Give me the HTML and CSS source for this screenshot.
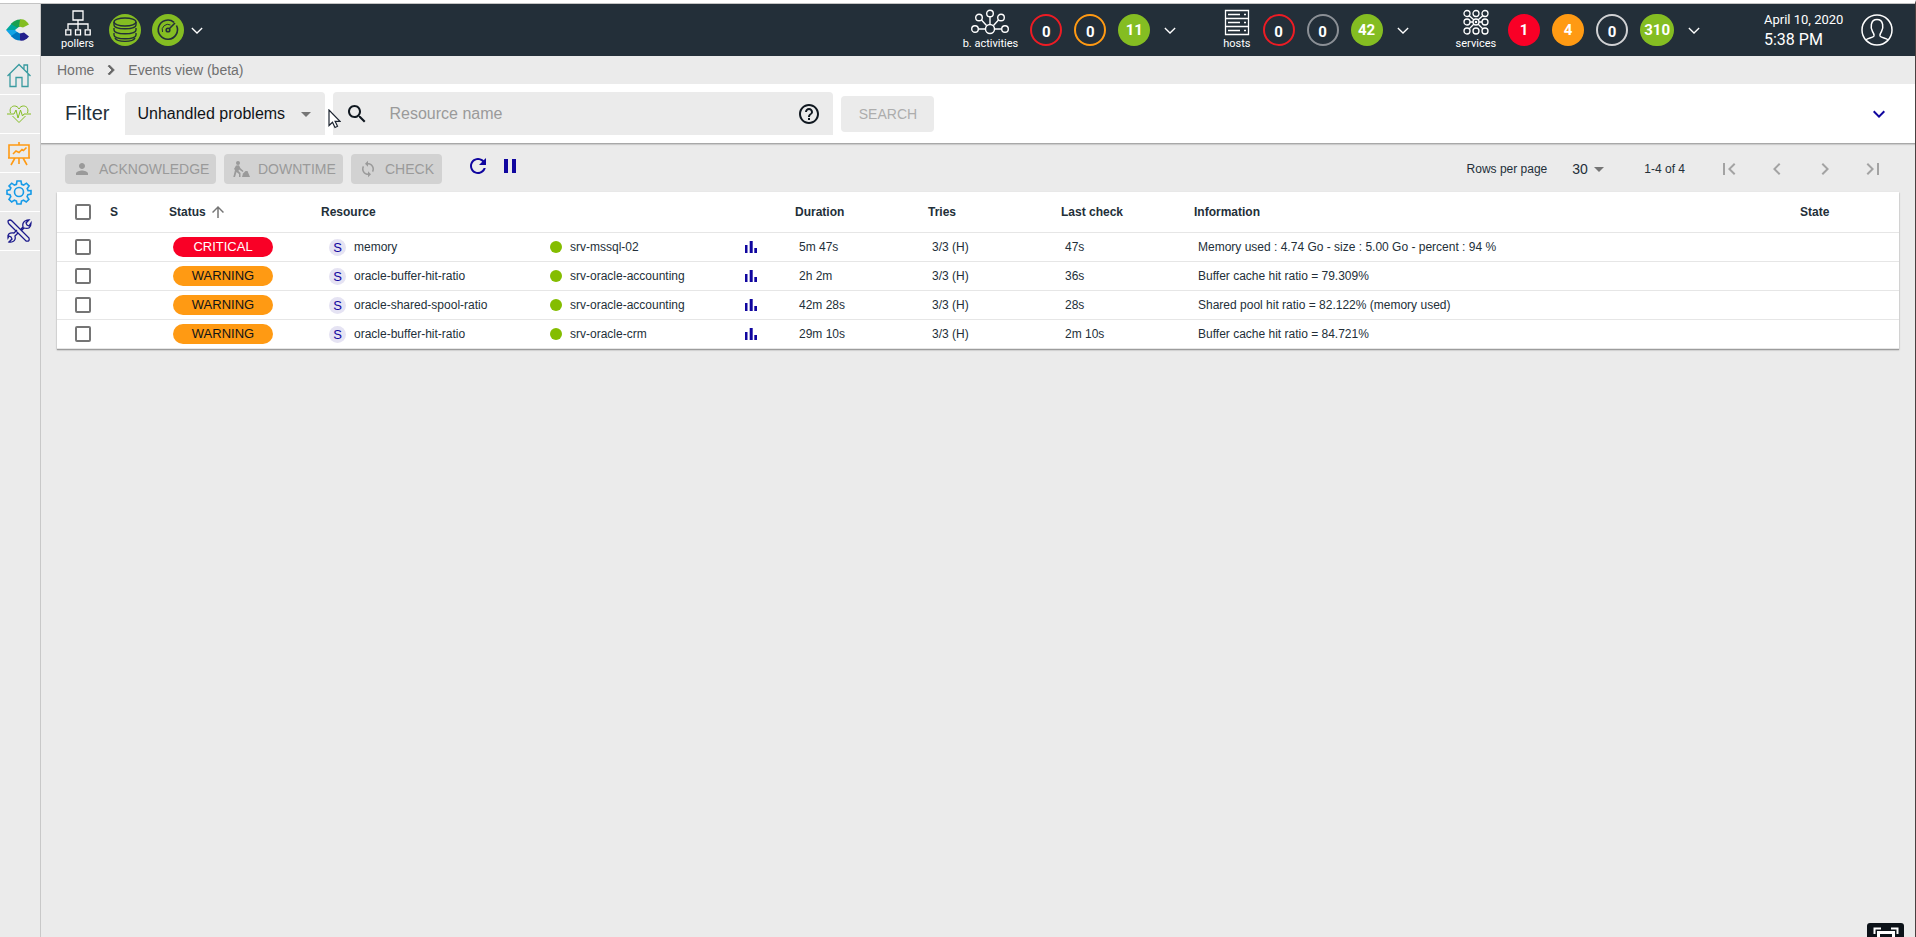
FILE: index.html
```html
<!DOCTYPE html>
<html lang="en">
<head>
<meta charset="utf-8">
<title>Events view</title>
<link rel="stylesheet" href="styles.css">
</head>
<body>
<svg class="defs" aria-hidden="true">
  <symbol id="chevron" viewBox="0 0 14 8"><path d="M1 1l6 6 6-6" fill="none" stroke="currentColor" stroke-width="1.5"/></symbol>
  <symbol id="bars" viewBox="0 0 12 12"><path d="M0 4h2.500v8H0zM4.700 0h3v12h-3zM9.300 7H12v5H9.300z" fill="currentColor"/></symbol>
  <symbol id="caret" viewBox="0 0 24 24"><path d="M7 10l5 5 5-5z" fill="currentColor"/></symbol>
</svg>
<div class="app">
  <nav class="sidebar" aria-label="Main">
    <a class="side-item side-logo" href="#" aria-label="Centreon">
      <svg width="24" height="24" viewBox="0 0 24 24">
        <path d="M0 12L6 5l8 3-5 4z" fill="#00a79b"/>
        <path d="M5 6q4-5 10-4.500l-1 7-3 1z" fill="#19a050"/>
        <path d="M14 1.500q5-1 9 5L17 9.500 13 8.500z" fill="#84bd22"/>
        <path d="M0 12h9l3 3-6 4z" fill="#12a5e6"/>
        <path d="M5 18l6-4 4 2-1 6.500q-5 0-9-4.500z" fill="#0079c2"/>
        <path d="M14 22.500l0-7 4-1 5 4q-4 5-9 4z" fill="#221f8c"/>
      </svg>
    </a>
    <a class="side-item home" href="#" aria-label="Home">
      <svg width="26" height="26" viewBox="0 0 26 26"><path d="M1.500 14L13 2.500 24.500 14M4 12v12.500h6v-9h6v9h6V12M18 7V3h3.500v7.500"/></svg>
    </a>
    <a class="side-item monitoring" href="#" aria-label="Monitoring">
      <svg width="26" height="26" viewBox="0 0 26 26"><path d="M4.500 12C3 7 6 5 8.500 5c2 0 3.500 1 4.500 3 1-2 2.500-3 4.500-3 2.500 0 5.500 2 4 7M6.500 15l6.500 6.500 6.500-6.500M1 13h7l2-4 2 8 2.500-8 2 6 1.500-2h7"/></svg>
    </a>
    <a class="side-item reporting" href="#" aria-label="Reporting">
      <svg width="26" height="26" viewBox="0 0 26 26"><path d="M3 5h20v13H3zM13 5V2M2 18h22M9 18l-4 7M17 18l4 7M13 18v6M7 14l3-3 3 1.500 3-3 1.500 1 3-3"/></svg>
    </a>
    <a class="side-item config" href="#" aria-label="Configuration">
      <svg width="26" height="26" viewBox="0 0 26 26"><circle cx="13" cy="13" r="4.500"/><path d="M11 2h4l.6 3.300 2 .8 2.800-1.900 2.700 2.700-1.900 2.800.9 2L25 11.500v3.500l-3.100.6-.8 2 1.800 2.700-2.700 2.700-2.700-1.800-2 .8L15 25h-4l-.6-3-2-.8L5.700 23 3 20.300l1.800-2.700-.8-2-3-.6v-3.500l3-.6.9-2L3 6.900l2.700-2.700 2.700 1.900 2-.8z"/></svg>
    </a>
    <a class="side-item admin" href="#" aria-label="Administration">
      <svg width="26" height="26" viewBox="0 0 26 26"><path d="M2 3q2-2 4 0l17 17q1 4-3 3L3 6q-1-1-1-3zM15 11l2-2q-1-4 2-6 2-1 4-1l-3 3 1 2 2 1 2-3q0 7-7 5l-3 3M12 15l-3 3q1 4-2 5.500-2 1-4 .5l3-3-1-2-2-1-1 2q-1-6 6-5l3-3"/></svg>
    </a>
  </nav>

  <div class="page">
    <header class="topbar">
      <div class="top-group pollers">
        <div class="top-label">
          <svg width="26" height="27" viewBox="0 0 26 27"><path d="M8 1h10v9H8zM13 10v9M3 19v-5h20v5M.8 19.800h5v5h-5zM10.500 19.800h5v5h-5zM20.200 19.800h5v5h-5z" fill="none" stroke="#fff" stroke-width="1.300"/></svg>
          <span>pollers</span>
        </div>
        <svg width="32" height="32" viewBox="0 0 32 32"><circle cx="16" cy="16" r="16" fill="#84bd22"/><g fill="none" stroke="#232f39" stroke-width="1.400"><ellipse cx="16" cy="8" rx="11" ry="4"/><path d="M5 8v3c0 5 22 5 22 0V8M5 14v2c0 5 22 5 22 0v-2M5 19v2c0 5 22 5 22 0v-2M6 24c2 4.500 18 4.500 20 0"/></g></svg>
        <svg width="32" height="32" viewBox="0 0 32 32"><circle cx="16" cy="16" r="16" fill="#84bd22"/><g fill="none" stroke="#232f39" stroke-width="1.600"><path d="M22 8.300A9.600 9.600 0 1 0 24.500 11.500"/><path d="M10.500 18a5.700 5.700 0 0 1 8-7" stroke-width="1"/><circle cx="16" cy="16" r="1.800"/><path d="M17 15l6-6"/></g></svg>
        <svg class="chev" width="12" height="7"><use href="#chevron"/></svg>
      </div>

      <div class="top-group activities">
        <div class="top-label">
          <svg width="38" height="27" viewBox="0 0 38 27"><g fill="none" stroke="#fff" stroke-width="1.400"><circle cx="19" cy="20" r="4.500"/><circle cx="19" cy="4.500" r="3.300"/><circle cx="8" cy="8.500" r="3.300"/><circle cx="30" cy="8.500" r="3.300"/><circle cx="4" cy="20" r="3.300"/><circle cx="34" cy="20" r="3.300"/><path d="M19 8v7.500M10.500 11l5 5.500M27.500 11l-5 5.500M7.300 20h7.200M23.500 20h7.200"/></g></svg>
          <span>b. activities</span>
        </div>
        <span class="badge line-red">0</span><span class="badge line-orange">0</span><span class="badge green">11</span>
        <svg class="chev" width="12" height="7"><use href="#chevron"/></svg>
      </div>
      <div class="top-group">
        <div class="top-label">
          <svg width="26" height="27" viewBox="0 0 26 27"><g fill="none" stroke="#fff" stroke-width="1.300"><path d="M1.500 1.500h23v24h-23zM1.500 9.500h23M1.500 17.500h23M4 5.500h12M4 13.500h12M4 21.500h12M20 5.500h2M20 13.500h2M20 21.500h2"/></g></svg>
          <span>hosts</span>
        </div>
        <span class="badge line-red">0</span><span class="badge line-gray">0</span><span class="badge green">42</span>
        <svg class="chev" width="12" height="7"><use href="#chevron"/></svg>
      </div>
      <div class="top-group">
        <div class="top-label">
          <svg width="26" height="27" viewBox="0 0 26 27"><g fill="none" stroke="#fff" stroke-width="1.300"><circle cx="4" cy="4.500" r="3"/><circle cx="13" cy="4.500" r="3"/><circle cx="22" cy="4.500" r="3"/><circle cx="4" cy="13" r="3"/><circle cx="13" cy="13" r="3"/><circle cx="22" cy="13" r="3"/><circle cx="4" cy="22" r="3"/><circle cx="13" cy="22" r="3"/><circle cx="22" cy="22" r="3"/><path d="M6 6.500l5 4.500M20 6.500L15 11M6 20l5-5M20 20l-5-5M7 13h3M16 13h3"/><circle cx="13" cy="13" r=".6"/></g></svg>
          <span>services</span>
        </div>
        <span class="badge red">1</span><span class="badge orange">4</span><span class="badge line-light">0</span><span class="badge green">310</span>
        <svg class="chev" width="12" height="7"><use href="#chevron"/></svg>
      </div>
      <div class="clock"><span>April 10, 2020</span><span class="time">5:38 PM</span></div>
      <svg width="32" height="32" viewBox="0 0 32 32"><g fill="none" stroke="#fff" stroke-width="1.500"><circle cx="16" cy="16" r="15"/><path d="M5 26c1-2 7-2 8-4 .5-1.500-.5-3-1.500-4.500-2-3-2.500-12 4.500-12s6.500 9 4.500 12c-1 1.500-2 3-1.500 4.500 1 2 7 2 8 4"/></g></svg>
    </header>

    <nav class="crumbs" aria-label="Breadcrumb">
      <a href="#">Home</a>
      <svg width="20" height="20" viewBox="0 0 24 24"><path d="M10 6L8.590 7.410 13.170 12l-4.580 4.590L10 18l6-6z" fill="#666" stroke="#666"/></svg>
      <a href="#">Events view (beta)</a>
    </nav>

    <section class="filter">
      <label class="filter-title" for="criteria">Filter</label>
      <div class="select-box criteria">
        <select id="criteria"><option>Unhandled problems</option></select>
        <svg width="24" height="24"><use href="#caret"/></svg>
      </div>
      <div class="search-box">
        <svg width="24" height="24" viewBox="0 0 24 24"><path fill="#101820" d="M15.500 14h-.79l-.28-.27C15.410 12.590 16 11.110 16 9.500 16 5.910 13.090 3 9.500 3S3 5.910 3 9.500 5.910 16 9.500 16c1.610 0 3.090-.59 4.230-1.570l.27.28v.79l5 4.990L20.490 19l-4.990-5zm-6 0C7.010 14 5 11.990 5 9.500S7.010 5 9.500 5 14 7.010 14 9.500 11.990 14 9.500 14z"/></svg>
        <input type="text" placeholder="Resource name" aria-label="Resource name">
        <svg width="24" height="24" viewBox="0 0 24 24"><path fill="#101820" d="M11 18h2v-2h-2v2zm1-16C6.480 2 2 6.480 2 12s4.480 10 10 10 10-4.480 10-10S17.520 2 12 2zm0 18c-4.410 0-8-3.590-8-8s3.590-8 8-8 8 3.590 8 8-3.590 8-8 8zm0-14c-2.210 0-4 1.790-4 4h2c0-1.100.9-2 2-2s2 .9 2 2c0 2-3 1.750-3 5h2c0-2.250 3-2.500 3-5 0-2.210-1.790-4-4-4z"/></svg>
      </div>
      <button class="search-btn" type="button" disabled>SEARCH</button>
      <button class="icon-btn expand" type="button" aria-label="Expand">
        <svg width="24" height="24" viewBox="0 0 24 24"><path d="M16.590 8.590L12 13.170 7.410 8.590 6 10l6 6 6-6z" fill="currentColor"/></svg>
      </button>
    </section>

    <main class="content">
      <div class="toolbar">
        <button class="action ack" type="button" disabled>
          <svg width="18" height="18" viewBox="0 0 24 24"><path fill="currentColor" d="M12 12c2.210 0 4-1.790 4-4s-1.790-4-4-4-4 1.790-4 4 1.790 4 4 4zm0 2c-2.670 0-8 1.340-8 4v2h16v-2c0-2.660-5.330-4-8-4z"/></svg>ACKNOWLEDGE</button>
        <button class="action down" type="button" disabled>
          <svg width="18" height="18" viewBox="0 0 18 18"><g fill="currentColor"><circle cx="6" cy="3" r="2"/><path d="M4 5.500l3-.3 1.500 3 3 2.800-.8 1L7 9.500 6.500 11l2 2V17H7v-3l-2.500-2L3 17H1.300L3 10 2 9z"/><path d="M10 17l1-3.500L13.500 11h2L18 17z"/></g></svg>DOWNTIME</button>
        <button class="action check" type="button" disabled>
          <svg width="18" height="18" viewBox="0 0 24 24"><path fill="currentColor" d="M12 4V1L8 5l4 4V6c3.310 0 6 2.690 6 6 0 1.010-.25 1.970-.7 2.800l1.460 1.460C19.540 15.030 20 13.570 20 12c0-4.420-3.580-8-8-8zm0 14c-3.310 0-6-2.690-6-6 0-1.010.25-1.970.7-2.800L5.240 7.740C4.460 8.970 4 10.430 4 12c0 4.420 3.580 8 8 8v3l4-4-4-4v3z"/></svg>CHECK</button>
        <div class="refresh">
          <button class="icon-btn" type="button" aria-label="Refresh"><svg width="24" height="24" viewBox="0 0 24 24"><path fill="currentColor" d="M17.650 6.350C16.200 4.900 14.210 4 12 4c-4.420 0-7.990 3.580-7.990 8s3.570 8 7.990 8c3.730 0 6.840-2.550 7.730-6h-2.080c-.82 2.330-3.040 4-5.650 4-3.310 0-6-2.690-6-6s2.690-6 6-6c1.660 0 3.140.69 4.220 1.780L13 11h7V4l-2.350 2.350z"/></svg></button>
          <button class="icon-btn" type="button" aria-label="Pause"><svg width="24" height="24" viewBox="0 0 24 24"><path fill="currentColor" d="M6 19h4V5H6v14zm8-14v14h4V5h-4z"/></svg></button>
        </div>
        <div class="pager">
          <label for="rows">Rows per page</label>
          <div class="select-box rows">
            <select id="rows"><option>30</option></select>
            <svg width="24" height="24"><use href="#caret"/></svg>
          </div>
          <span class="range">1-4 of 4</span>
          <button class="page-btn" type="button" disabled aria-label="First page"><svg width="24" height="24" viewBox="0 0 24 24"><path fill="currentColor" d="M18.410 16.590L13.820 12l4.590-4.590L17 6l-6 6 6 6zM6 6h2v12H6z"/></svg></button>
          <button class="page-btn" type="button" disabled aria-label="Previous page"><svg width="24" height="24" viewBox="0 0 24 24"><path fill="currentColor" d="M15.410 7.410L14 6l-6 6 6 6 1.410-1.410L10.830 12z"/></svg></button>
          <button class="page-btn" type="button" disabled aria-label="Next page"><svg width="24" height="24" viewBox="0 0 24 24"><path fill="currentColor" d="M10 6L8.590 7.410 13.170 12l-4.580 4.590L10 18l6-6z"/></svg></button>
          <button class="page-btn" type="button" disabled aria-label="Last page"><svg width="24" height="24" viewBox="0 0 24 24"><path fill="currentColor" d="M5.590 7.410L10.180 12l-4.590 4.590L7 18l6-6-6-6zM16 6h2v12h-2z"/></svg></button>
        </div>
      </div>

      <table class="events">
        <colgroup><col class="c-check"><col class="c-sev"><col class="c-status"><col class="c-res"><col class="c-parent"><col class="c-graph"><col class="c-dur"><col class="c-tries"><col class="c-last"><col><col class="c-state"></colgroup>
        <thead>
          <tr>
            <th class="pick"><input type="checkbox" aria-label="Select all"></th>
            <th>S</th>
            <th><span class="sort">Status <svg width="18" height="18" viewBox="0 0 24 24"><path fill="#757575" d="M4 12l1.410 1.410L11 7.830V20h2V7.830l5.580 5.590L20 12l-8-8-8 8z"/></svg></span></th>
            <th colspan="3">Resource</th><th>Duration</th><th>Tries</th><th>Last check</th><th>Information</th><th>State</th>
          </tr>
        </thead>
        <tbody>
          <tr>
            <td class="pick"><input type="checkbox" aria-label="Select memory"></td><td></td>
            <td><span class="chip critical">CRITICAL</span></td>
            <td><span class="res"><span class="kind">S</span>memory</span></td>
            <td><span class="host">srv-mssql-02</span></td>
            <td class="graph"><svg width="12" height="12"><use href="#bars"/></svg></td>
            <td>5m 47s</td><td>3/3 (H)</td><td>47s</td><td>Memory used : 4.74 Go - size : 5.00 Go - percent : 94 %</td><td></td>
          </tr>
          <tr>
            <td class="pick"><input type="checkbox" aria-label="Select oracle-buffer-hit-ratio"></td><td></td>
            <td><span class="chip warning">WARNING</span></td>
            <td><span class="res"><span class="kind">S</span>oracle-buffer-hit-ratio</span></td>
            <td><span class="host">srv-oracle-accounting</span></td>
            <td class="graph"><svg width="12" height="12"><use href="#bars"/></svg></td>
            <td>2h 2m</td><td>3/3 (H)</td><td>36s</td><td>Buffer cache hit ratio = 79.309%</td><td></td>
          </tr>
          <tr>
            <td class="pick"><input type="checkbox" aria-label="Select oracle-shared-spool-ratio"></td><td></td>
            <td><span class="chip warning">WARNING</span></td>
            <td><span class="res"><span class="kind">S</span>oracle-shared-spool-ratio</span></td>
            <td><span class="host">srv-oracle-accounting</span></td>
            <td class="graph"><svg width="12" height="12"><use href="#bars"/></svg></td>
            <td>42m 28s</td><td>3/3 (H)</td><td>28s</td><td>Shared pool hit ratio = 82.122% (memory used)</td><td></td>
          </tr>
          <tr>
            <td class="pick"><input type="checkbox" aria-label="Select oracle-buffer-hit-ratio on srv-oracle-crm"></td><td></td>
            <td><span class="chip warning">WARNING</span></td>
            <td><span class="res"><span class="kind">S</span>oracle-buffer-hit-ratio</span></td>
            <td><span class="host">srv-oracle-crm</span></td>
            <td class="graph"><svg width="12" height="12"><use href="#bars"/></svg></td>
            <td>29m 10s</td><td>3/3 (H)</td><td>2m 10s</td><td>Buffer cache hit ratio = 84.721%</td><td></td>
          </tr>
        </tbody>
      </table>
    </main>
  </div>
</div>
<button class="fullscreen" type="button" aria-label="Full screen">
  <svg width="26" height="20" viewBox="0 0 26 20"><path d="M1.500 7V1.500H8M18 1.500h6.500V7" fill="none" stroke="#fff" stroke-width="2"/><path d="M5.500 14V5.500h15V14z" fill="none" stroke="#fff" stroke-width="3"/></svg>
</button>
<svg class="cursor" width="13" height="20" viewBox="0 0 13 20"><path d="M1 1v15.500l3.500-3.300L7 18.500l2.500-1.200-2.400-5H12z" fill="#fff" stroke="#1c2430" stroke-width="1.200"/></svg>
</body>
</html>
```
FILE: styles.css
```css
* { box-sizing: border-box; }

body {
  margin: 0;
  background: #ebebeb;
  color: #232f39;
  font-family: "Liberation Sans", Arial, sans-serif;
  font-size: 12px;
}

svg { display: block; flex: none; }
.defs { position: absolute; width: 0; height: 0; }
a { color: inherit; text-decoration: none; }
button, input, select { font: inherit; color: inherit; }
button, select { border: 0; padding: 0; margin: 0; background: none; }

.app {
  display: flex;
  min-height: 100vh;
  border-top: 3px solid #fff;
  border-right: 1px solid #4a4040;
  overflow: hidden;
}

/* Sidebar */
.sidebar {
  flex: none;
  width: 41px;
  border-top: 1px solid #c4c4c4;
  border-right: 1px solid #c8c8c8;
}
.side-item {
  display: flex;
  align-items: center;
  justify-content: center;
  height: 39px;
  padding-right: 2px;
  border-bottom: 1px solid #fff;
  fill: none;
  stroke-width: 1.3;
}
.side-logo { height: 52px; padding-right: 5px; }
.home { stroke: #3a9ba0; }
.monitoring { stroke: #84bd22; stroke-width: 1; }
.reporting { stroke: #ff9a13; stroke-width: 1.6; }
.config { stroke: #169be8; stroke-width: 1.6; }
.admin { stroke: #1c1a8c; }

.page { flex: 1; min-width: 0; }

/* Top bar */
.topbar {
  display: flex;
  align-items: center;
  height: 53px;
  padding: 0 22px 0 20px;
  border-top: 1px solid #c4c4c4;
  background: #232f39;
  color: #fff;
  font-family: Roboto, sans-serif;
}
.top-group { display: flex; align-items: center; gap: 12px; margin-right: 47px; }
.pollers { gap: 11px; }
.activities { margin-left: auto; }
.top-label {
  display: flex;
  flex-direction: column;
  align-items: center;
  font-size: 11px;
  line-height: 16px;
}
.chev { margin-left: 2px; }
.pollers .top-label { margin-right: 4px; line-height: 14px; }
.pollers .chev { margin-left: -4px; }
.badge {
  display: flex;
  align-items: center;
  justify-content: center;
  min-width: 32px;
  height: 32px;
  padding: 0 4px;
  border-radius: 16px;
  font-size: 15px;
  font-weight: 700;
}
.red { background: #f90026; }
.orange { background: #ff9a13; }
.green { background: #84bd22; }
.line-red, .line-orange, .line-gray, .line-light { border: 2px solid; padding-top: 4px; }
.line-red { border-color: #ed1c24; }
.line-orange { border-color: #ff9a13; }
.line-gray { border-color: #8b9096; }
.line-light { border-color: #d1d2d4; }
.clock {
  display: flex;
  flex-direction: column;
  width: 77px;
  margin: 0 20px 0 17px;
  font-size: 13px;
  line-height: 20px;
  white-space: nowrap;
}
.time { font-size: 16px; }

/* Breadcrumb */
.crumbs {
  display: flex;
  align-items: center;
  gap: 7px;
  height: 28px;
  padding-left: 16px;
  color: #707070;
  font-size: 14px;
}

/* Filter */
.filter {
  display: flex;
  align-items: center;
  gap: 8px;
  height: 60px;
  padding: 0 24px;
  border-bottom: 1px solid #a8a8a8;
  background: #fff;
  box-shadow: 0 1px 1px #ccc;
}
.filter-title { margin-right: 8px; font-size: 20px; }
.select-box { display: grid; align-items: center; }
.select-box select { grid-area: 1 / 1; appearance: none; width: 100%; outline: 0; }
.select-box svg { grid-area: 1 / 1; justify-self: end; color: #757575; pointer-events: none; }
.criteria {
  width: 200px;
  border-radius: 4px 4px 0 0;
  background: #ebebeb;
  color: #101418;
  font-size: 16px;
}
.criteria select { height: 43px; padding: 0 32px 0 12px; }
.criteria svg { margin-right: 7px; }
.search-box {
  display: flex;
  align-items: center;
  width: 500px;
  height: 43px;
  padding: 0 12px;
  border-radius: 4px 4px 0 0;
  background: #ebebeb;
  font-size: 16px;
}
.search-box input {
  flex: 1;
  min-width: 0;
  padding: 0 20px;
  border: 0;
  outline: 0;
  background: none;
}
.search-box input::placeholder { color: #9a9a9a; opacity: 1; }
.search-btn {
  width: 93px;
  height: 36px;
  border-radius: 4px;
  background: #ebebeb;
  color: #adadad;
  font-size: 14px;
}
.icon-btn { color: #10069f; }
.expand { margin-left: auto; }

/* Toolbar */
.content { padding: 0 16px; }
.toolbar {
  display: flex;
  align-items: center;
  gap: 8px;
  height: 48px;
  padding: 2px 0 0 8px;
}
.action {
  display: flex;
  align-items: center;
  gap: 8px;
  height: 30px;
  padding-left: 8px;
  border-radius: 4px;
  background: #d2d2d2;
  color: #9a9a9a;
  font-size: 14px;
}
.ack { width: 151px; }
.down { width: 119px; }
.check { width: 91px; }
.refresh { display: flex; gap: 8px; margin-left: 16px; padding-bottom: 6px; }
.pager { display: flex; align-items: center; margin-left: auto; }
.rows { width: 39px; margin: 0 33px 0 25px; font-size: 14px; }
.range { margin-right: 20px; }
.page-btn { padding: 12px; color: #a3a3a3; }
.page-btn:last-child { margin-right: 2px; }

/* Events table */
.events {
  width: 100%;
  table-layout: fixed;
  border-collapse: separate;
  border-spacing: 0;
  background: #fff;
  box-shadow: 0 1px 1px #9c9c9c, 0 1px 2px #c4c4c4;
}
.c-check { width: 53px; }
.c-sev { width: 59px; }
.c-status { width: 152px; }
.c-res { width: 225px; }
.c-parent { width: 183px; }
.c-graph { width: 66px; }
.c-dur { width: 133px; }
.c-tries { width: 133px; }
.c-last { width: 133px; }
.c-state { width: 99px; }
.events th, .events td {
  padding: 0;
  border-bottom: 1px solid #e6e6e6;
  text-align: left;
  white-space: nowrap;
}
.events th { height: 41px; }
.events td { height: 29px; padding-left: 4px; }
.events .pick { padding-left: 18px; }
.pick input {
  display: block;
  appearance: none;
  width: 16px;
  height: 16px;
  margin: 0;
  border: 2px solid #757575;
  border-radius: 2px;
}
.sort, .res, .host { display: flex; align-items: center; }
.sort { gap: 3px; }
.chip {
  display: block;
  width: 100px;
  border-radius: 10px;
  font-size: 13px;
  line-height: 20px;
  text-align: center;
}
.critical { background: #f90026; color: #fff; }
.warning { background: #ff9a13; color: #101418; }
.res { gap: 8px; padding-left: 4px; }
.kind {
  width: 17px;
  border-radius: 50%;
  background: #e5e3f3;
  color: #10069f;
  font-size: 13px;
  line-height: 17px;
  text-align: center;
}
.host { gap: 8px; }
.host::before {
  content: "";
  width: 12px;
  height: 12px;
  border-radius: 50%;
  background: #84bd00;
}
.events .graph { padding-left: 16px; color: #10069f; }

/* Overlays */
.fullscreen {
  position: fixed;
  right: 12px;
  bottom: -6px;
  display: flex;
  justify-content: center;
  width: 37px;
  height: 20px;
  padding-top: 4px;
  border-radius: 3px;
  background: #0c1218;
}
.cursor { position: absolute; left: 328px; top: 109px; }
```
